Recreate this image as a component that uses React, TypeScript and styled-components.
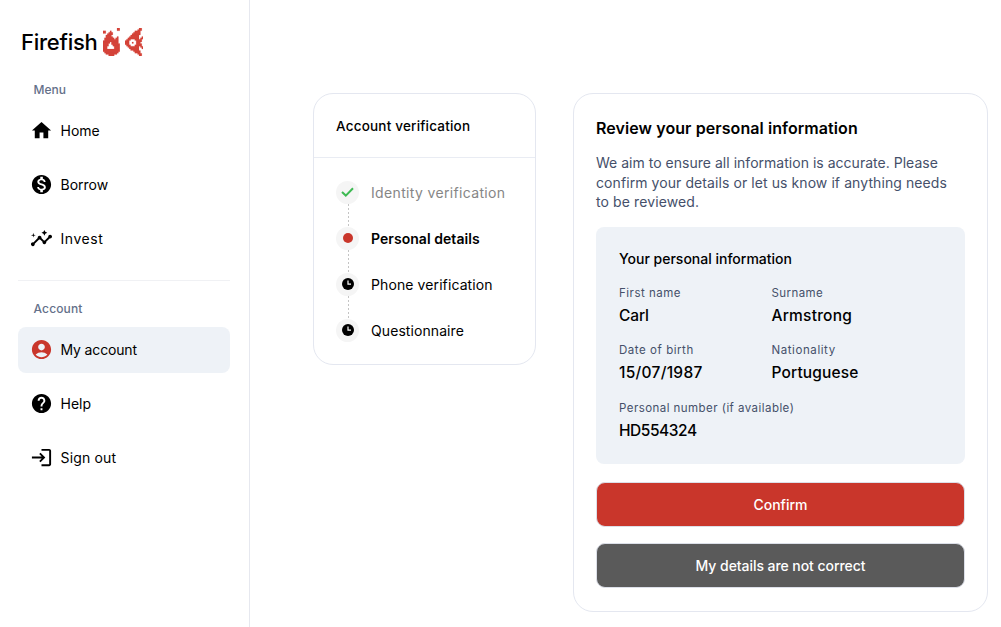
import React from "react";
import styled, { createGlobalStyle, css } from "styled-components";
import { MdHome, MdMonetizationOn, MdInsights, MdAccountCircle, MdHelp, MdLogin } from "react-icons/md";

const GlobalStyle = createGlobalStyle`
  * { box-sizing: border-box; }
  body { margin: 0; background: #fff; color: #000; font-family: Inter, "Liberation Sans", sans-serif; }
  h1, h2, h3, p, ul, ol, dl, dd { margin: 0; padding: 0; list-style: none; }
`;

const Page = styled.div`
  display: flex;
  height: 627px;
  overflow: hidden;
`;

const Sidebar = styled.aside`
  width: 250px;
  flex: none;
  border-right: 1px solid #e6e8ef;
  padding: 27px 19px 0 18px;
`;

const Logo = styled.div`
  display: flex;
  align-items: center;
  height: 29px;
  padding-left: 3px;
  gap: 5px;
  margin-bottom: 26px;
`;

const track = css<{ $track?: number }>`
  letter-spacing: ${(p) => p.$track ?? 0}px;
  white-space: nowrap;
`;

const Wordmark = styled.span<{ $track?: number }>`
  padding-top: 1px;
  width: 77px;
  font-size: 22px;
  font-weight: 500;
  line-height: 29px;
  ${track}
`;

const PixelArt = styled.svg`
  display: block;
  flex: none;
`;

const SectionLabel = styled.h2<{ $track?: number }>`
  padding-left: 15.5px;
  font-size: 12px;
  line-height: 16px;
  font-weight: 500;
  color: #647089;
  ${track}
`;

const NavList = styled.ul`
  display: flex;
  flex-direction: column;
  gap: 8px;
  margin-top: 10px;
`;

const NavItem = styled.li<{ $active?: boolean; $track?: number }>`
  display: flex;
  align-items: center;
  height: 45.8px;
  padding: 0 0 0.7px 11.5px;
  gap: 8px;
  border-radius: 8px;
  font-size: 14px;
  background: ${(p) => (p.$active ? "#eef2f7" : "transparent")};
  ${track}
  svg {
    width: 23px;
    height: 23px;
    flex: none;
    color: ${(p) => (p.$active ? "#c9362b" : "#000")};
  }
`;

const Rule = styled.hr`
  border: 0;
  height: 1px;
  background: #f0f1f4;
  margin: 19px 0 20px;
`;

const Main = styled.main`
  flex: 1;
  display: flex;
  align-items: flex-start;
  gap: 37px;
  padding: 93px 13px 0 63px;
`;

const Card = styled.section<{ $width: number; $height: number }>`
  width: ${(p) => p.$width}px;
  height: ${(p) => p.$height}px;
  flex: none;
  border: 1px solid #e4e7f0;
  border-radius: 20px;
`;

const CardHeader = styled.header<{ $track?: number }>`
  height: 64px;
  padding: 0 22px;
  border-bottom: 1px solid #e9ecf3;
  font-size: 13.5px;
  font-weight: 500;
  line-height: 64px;
  ${track}
`;

const Steps = styled.ol`
  padding: 22.5px 0 0 22px;
`;

const StepRow = styled.li<{ $state: StepState; $track?: number }>`
  display: flex;
  gap: 12px;
  height: 46px;
  font-size: 14px;
  line-height: 24px;
  font-weight: ${(p) => (p.$state === "current" ? 600 : 400)};
  color: ${(p) => (p.$state === "done" ? "#868686" : "#000")};
  ${track}
`;

const StepMarker = styled.div`
  display: flex;
  flex-direction: column;
  align-items: center;
  height: 46px;
`;

const StepDot = styled.span`
  display: flex;
  align-items: center;
  justify-content: center;
  width: 23px;
  height: 23px;
  border-radius: 50%;
  background: #f5f5f5;
`;

const CurrentDot = styled.span`
  width: 10px;
  height: 10px;
  border-radius: 50%;
  background: #c9362b;
`;

const Connector = styled.span`
  width: 1px;
  height: 23px;
  margin-left: 1px;
  background: repeating-linear-gradient(#c4c4c4 0 2px, transparent 2px 4px);
`;

const ReviewBody = styled.div`
  padding: 22px 22px 0;
`;

const Title = styled.h1<{ $track?: number }>`
  font-size: 16px;
  line-height: 24px;
  font-weight: 600;
  ${track}
`;

const Intro = styled.p`
  margin-top: 13.4px;
  font-size: 14px;
  line-height: 19.2px;
  color: #45506a;
`;

const Line = styled.span<{ $track?: number }>`
  display: block;
  ${track}
`;

const Details = styled.div`
  margin-top: 16px;
  height: 237px;
  padding: 22px 23px;
  border-radius: 8px;
  background: #eef2f7;
`;

const DetailsTitle = styled.h3<{ $track?: number }>`
  font-size: 14px;
  line-height: 20px;
  font-weight: 500;
  ${track}
`;

const Fields = styled.dl`
  display: grid;
  grid-template-columns: 152.5px 1fr;
  grid-auto-rows: 57.5px;
  margin-top: 15.6px;
`;

const FieldLabel = styled.dt<{ $track?: number }>`
  font-size: 11.5px;
  line-height: 16px;
  color: #45506a;
  ${track}
`;

const FieldValue = styled.dd<{ $track?: number }>`
  margin-top: 4px;
  font-size: 15.5px;
  line-height: 22px;
  font-weight: 500;
  ${track}
`;

const Button = styled.button<{ $primary?: boolean; $track?: number }>`
  display: block;
  width: 100%;
  height: 45px;
  margin-top: ${(p) => (p.$primary ? 18.4 : 16)}px;
  padding: 1px 0 0;
  border: 1px solid #dcdfe8;
  border-radius: 9px;
  background: ${(p) => (p.$primary ? "#c9362b" : "#5a5a5a")};
  color: #fff;
  font: 500 14px/20px Inter, "Liberation Sans", sans-serif;
  ${track}
`;

type StepState = "done" | "current" | "pending";

const steps: { label: string; state: StepState; track: number }[] = [
  { label: "Identity verification", state: "done", track: 0.34 },
  { label: "Personal details", state: "current", track: 0.05 },
  { label: "Phone verification", state: "pending", track: 0.1 },
  { label: "Questionnaire", state: "pending", track: 0.08 },
];

const fields = [
  { label: "First name", value: "Carl", labelTrack: 0.5, valueTrack: -0.1 },
  { label: "Surname", value: "Armstrong", labelTrack: 0.42, valueTrack: 0.22 },
  { label: "Date of birth", value: "15/07/1987", labelTrack: 0.55, valueTrack: 0.27 },
  { label: "Nationality", value: "Portuguese", labelTrack: 0.58, valueTrack: 0.15 },
  { label: "Personal number (if available)", value: "HD554324", labelTrack: 0.45, valueTrack: -0.45 },
];

const CheckIcon = () => (
  <svg width="13" height="10" viewBox="0 0 13 10" fill="none" stroke="#3dba52" strokeWidth="2">
    <path d="M1 5l3.8 3.6L12 1.2" />
  </svg>
);

const ClockIcon = () => (
  <svg width="12" height="12" viewBox="0 0 12 12">
    <circle cx="6" cy="6" r="6" />
    <path d="M6 2.5V6.2H9" fill="none" stroke="#fff" strokeWidth="1.2" />
  </svg>
);

const flame = [
  "..........##",
  "..........##",
  "##...#......",
  "##..###.....",
  "...####.....",
  "..####......",
  "..#####...#.",
  ".#######.##.",
  ".##########.",
  "###########.",
  "#####.#####.",
  "####..######",
  "####...#####",
  "###.....####",
  "###.....####",
  "############",
  "############",
  ".##########.",
  "..########..",
  "....####....",
];

const fish = [
  "..........##.",
  ".........###.",
  ".......####..",
  "......#####..",
  ".....######..",
  "....######...",
  "...#######..#",
  "..########.##",
  ".###...#####.",
  "###.....####.",
  "###..#..###..",
  "###.....####.",
  ".###...#####.",
  "..########.##",
  "...#######..#",
  "....######...",
  "......#####..",
  ".......####..",
  ".........###.",
  "..........##.",
];

const Pixels = ({ rows, cell }: { rows: string[]; cell: number }) => (
  <PixelArt width={rows[0].length * cell} height={rows.length * cell} viewBox={`0 0 ${rows[0].length} ${rows.length}`}>
    <path
      fill="#d6453a"
      stroke="#d6453a"
      strokeWidth="0.12"
      d={rows
        .flatMap((row, y) => [...row.matchAll(/#+/g)].map((run) => `M${run.index} ${y}h${run[0].length}v1h-${run[0].length}z`))
        .join("")}
    />
  </PixelArt>
);

export default function App() {
  return (
    <>
      <GlobalStyle />
      <Page>
        <Sidebar>
          <Logo>
            <Wordmark $track={-0.25}>Firefish</Wordmark>
            <Pixels rows={flame} cell={1.4} />
            <Pixels rows={fish} cell={1.4} />
          </Logo>
          <SectionLabel>Menu</SectionLabel>
          <NavList>
            <NavItem><MdHome />Home</NavItem>
            <NavItem><MdMonetizationOn />Borrow</NavItem>
            <NavItem $track={0.55}><MdInsights />Invest</NavItem>
          </NavList>
          <Rule />
          <SectionLabel $track={0.15}>Account</SectionLabel>
          <NavList>
            <NavItem $active $track={-0.15}><MdAccountCircle />My account</NavItem>
            <NavItem><MdHelp />Help</NavItem>
            <NavItem $track={0.15}><MdLogin />Sign out</NavItem>
          </NavList>
        </Sidebar>
        <Main>
          <Card $width={223} $height={272}>
            <CardHeader $track={0.2}>Account verification</CardHeader>
            <Steps>
              {steps.map((s, i) => (
                <StepRow key={s.label} $state={s.state} $track={s.track}>
                  <StepMarker>
                    <StepDot>{s.state === "done" ? <CheckIcon /> : s.state === "current" ? <CurrentDot /> : <ClockIcon />}</StepDot>
                    {i < steps.length - 1 && <Connector />}
                  </StepMarker>
                  {s.label}
                </StepRow>
              ))}
            </Steps>
          </Card>
          <Card $width={415} $height={519}>
            <ReviewBody>
              <Title $track={0.08}>Review your personal information</Title>
              <Intro>
                <Line $track={0.02}>We aim to ensure all information is accurate. Please </Line>
                <Line $track={0.08}>confirm your details or let us know if anything needs </Line>
                <Line $track={0.1}>to be reviewed.</Line>
              </Intro>
              <Details>
                <DetailsTitle>Your personal information</DetailsTitle>
                <Fields>
                  {fields.map((f) => (
                    <div key={f.label}>
                      <FieldLabel $track={f.labelTrack}>{f.label}</FieldLabel>
                      <FieldValue $track={f.valueTrack}>{f.value}</FieldValue>
                    </div>
                  ))}
                </Fields>
              </Details>
              <Button $primary>Confirm</Button>
              <Button $track={-0.06}>My details are not correct</Button>
            </ReviewBody>
          </Card>
        </Main>
      </Page>
    </>
  );
}
